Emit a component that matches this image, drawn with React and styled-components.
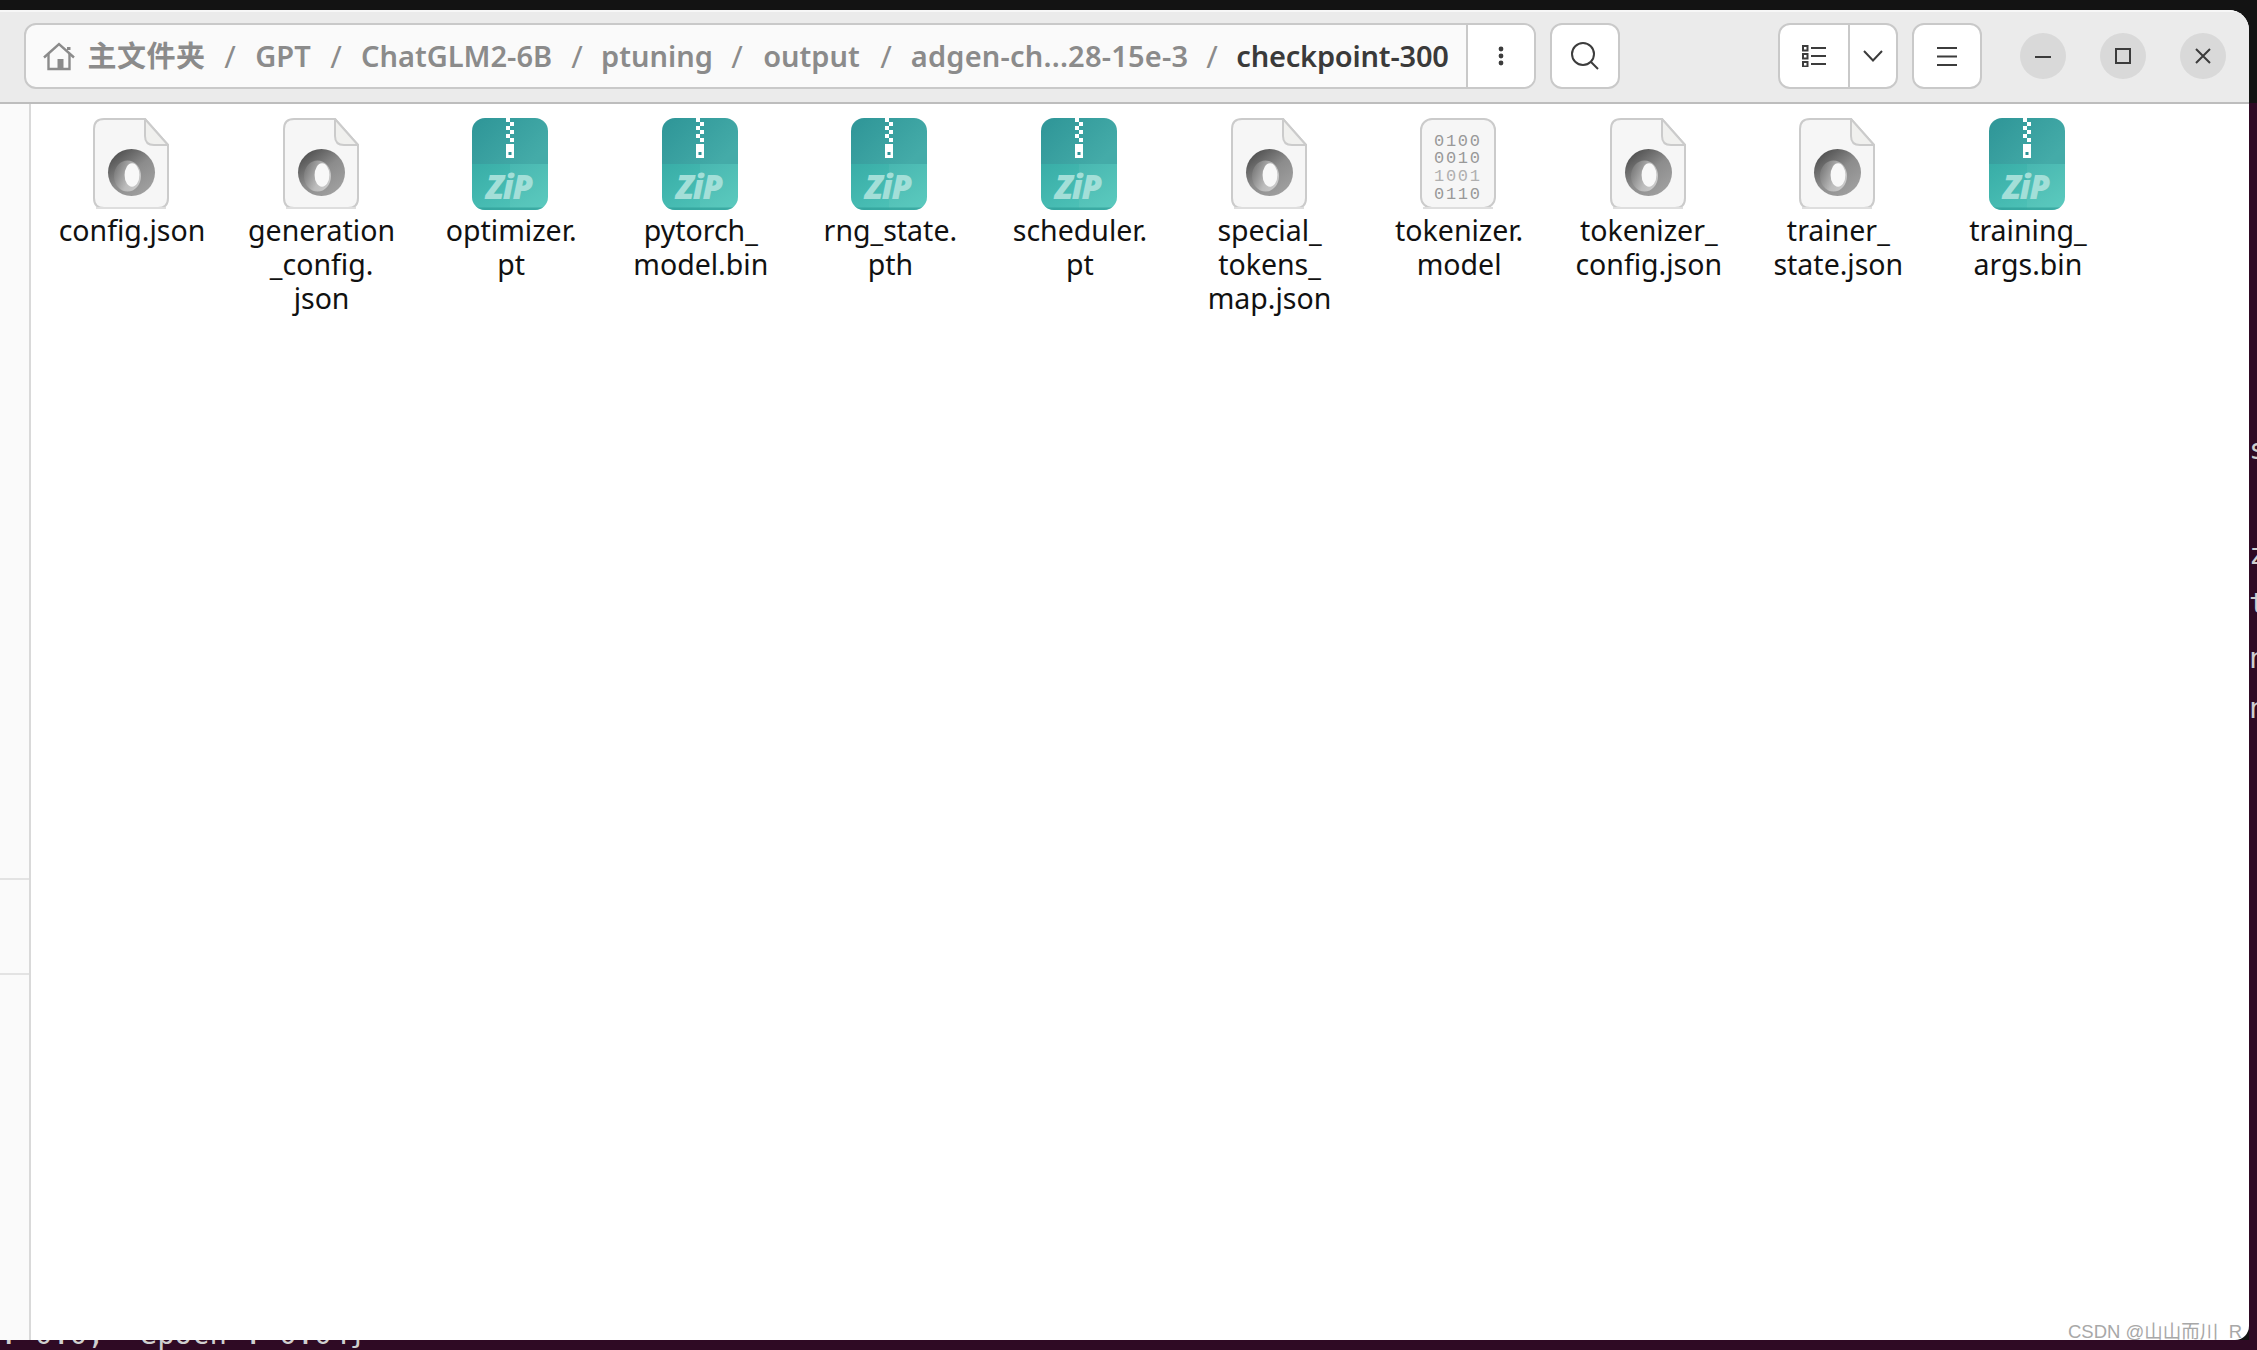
import React from 'react';
import styled, { createGlobalStyle } from 'styled-components';

const Global = createGlobalStyle`
  html, body { margin: 0; padding: 0; background: #131313; }
  body { width: 2257px; height: 1350px; overflow: hidden; font-family: "Noto Sans", "Noto Sans CJK SC", sans-serif; }
`;

const Screen = styled.div`
  display: grid;
  grid-template-columns: 2249px 8px;
  grid-template-rows: 1340px 10px;
  width: 2257px;
  height: 1350px;
  background: #131313;
`;

const Window = styled.div`
  position: relative;
  margin-top: 10px;
  display: flex;
  flex-direction: column;
  background: #fff;
  border-radius: 0 20px 14px 0;
  overflow: hidden;
  z-index: 1;
`;

const HeaderBar = styled.header`
  display: flex;
  align-items: flex-start;
  box-sizing: border-box;
  height: 94px;
  padding: 11px 23px 0 24px;
  background: #ebebeb;
  border-top: 2px solid #f7f7f7;
  border-bottom: 2px solid #bdbdbd;
`;

const PathBar = styled.div`
  display: flex;
  align-items: center;
  box-sizing: border-box;
  width: 1512px;
  height: 66px;
  background: #fafafa;
  border: 2px solid #c9c9c9;
  border-radius: 12px;
  overflow: hidden;
`;

const HomeWrap = styled.span`
  display: flex;
  margin-left: 17px;
  width: 45px;
  flex: none;
`;

const Crumb = styled.span`
  flex: none;
  display: flex;
  justify-content: center;
  width: ${p => p.$w}px;
  font-size: 29px;
  line-height: 36px;
  font-weight: 600;
  color: ${p => (p.$current ? '#3a3a3a' : '#8b8b8b')};
  white-space: nowrap;
  letter-spacing: ${p => p.$ls || 0}px;
`;

const Slash = styled.span`
  flex: none;
  width: ${p => p.$w || 50}px;
  text-align: center;
  font-size: 31px;
  line-height: 36px;
  color: #8b8b8b;
`;

const PathMenu = styled.button`
  flex: 1;
  margin-left: 17px;
  height: 100%;
  padding: 0;
  display: flex;
  align-items: center;
  justify-content: center;
  background: #fff;
  border: 0;
  border-left: 2px solid #c9c9c9;
`;

const ToolButton = styled.button`
  flex: none;
  box-sizing: border-box;
  width: ${p => p.$w || 70}px;
  height: 66px;
  margin-left: ${p => p.$ml || 0}px;
  padding: 0;
  display: flex;
  align-items: center;
  justify-content: center;
  background: #fff;
  border: 2px solid #c9c9c9;
  border-radius: 12px;
`;

const SplitButton = styled.div`
  flex: none;
  box-sizing: border-box;
  display: grid;
  grid-template-columns: 68px 1fr;
  width: 120px;
  height: 66px;
  margin-left: 158px;
  background: #fff;
  border: 2px solid #c9c9c9;
  border-radius: 12px;
  overflow: hidden;
`;

const SplitPart = styled.span`
  display: flex;
  align-items: center;
  justify-content: center;
  border-left: ${p => (p.$divided ? '2px solid #c9c9c9' : '0')};
`;

const WinButton = styled.button`
  flex: none;
  width: 46px;
  height: 46px;
  margin: 10px 0 0 ${p => p.$ml}px;
  padding: 0;
  display: flex;
  align-items: center;
  justify-content: center;
  border: 0;
  border-radius: 50%;
  background: #d9d9d9;
`;

const Body = styled.div`
  flex: 1;
  display: flex;
  min-height: 0;
`;

const Sidebar = styled.aside`
  flex: none;
  width: 29px;
  background: #fafafa;
  border-right: 2px solid #d9d9d9;
`;

const SidebarBlock = styled.div`
  height: 93px;
  margin-top: 774px;
  border-top: 2px solid #e3e3e3;
  border-bottom: 2px solid #e3e3e3;
`;

const FileGrid = styled.main`
  flex: 1;
  display: grid;
  grid-template-columns: repeat(11, 189.6px);
  align-content: start;
  padding: 14px 0 0 6.2px;
`;

const FileItem = styled.div`
  display: flex;
  flex-direction: column;
  align-items: center;
`;

const FileIconWrap = styled.div`
  display: flex;
  width: 76px;
  height: 92px;
  margin-right: 2px;
`;

const FileLabel = styled.div`
  margin-top: 3px;
  font-family: "Noto Sans", sans-serif;
  font-size: 28.5px;
  line-height: 34.2px;
  color: #111;
  text-align: center;
  white-space: pre-line;
`;

const Watermark = styled.div`
  position: absolute;
  right: 7px;
  bottom: -3px;
  font-family: "Liberation Sans", "Noto Sans CJK SC", sans-serif;
  font-size: 18.5px;
  line-height: 22px;
  color: #a8a8a8;
  white-space: nowrap;
`;

const TerminalEdge = styled.div`
  margin-top: 103px;
  background: #2f0a24;
  overflow: hidden;
  display: flex;
  flex-direction: column;
`;

const EdgeGlyph = styled.span`
  margin-top: ${p => p.$gap}px;
  font-family: "DejaVu Sans Mono", monospace;
  font-size: 29px;
  line-height: 34px;
  color: #cfcfcf;
`;

const TerminalStrip = styled.div`
  grid-column: 1 / 3;
  background: #2f0a24;
  overflow: hidden;
`;

const TerminalText = styled.pre`
  margin: -23px 0 0;
  font-family: "DejaVu Sans Mono", monospace;
  font-size: 29px;
  line-height: 34px;
  color: #cfcfcf;
`;

function HomeIcon() {
  return (
    <svg width="32" height="29" viewBox="0 0 32 29" fill="none" stroke="#8b8b8b" strokeWidth="2.4">
      <path d="M1 15.5 L16 2 L31 15.5" />
      <path d="M5.5 11 V27 H26.5 V11" />
      <rect x="14.5" y="17" width="6" height="11" fill="#8b8b8b" stroke="none" />
      <rect x="24" y="5" width="3.5" height="3" fill="#8b8b8b" stroke="none" />
    </svg>
  );
}

function JsonIcon({ id }) {
  return (
    <svg width="76" height="92" viewBox="0 0 76 92">
      <defs>
        <linearGradient id={`ring${id}`} x1="0.1" y1="0" x2="0.9" y2="1">
          <stop offset="0" stopColor="#454545" />
          <stop offset="0.5" stopColor="#8c8c8c" />
          <stop offset="1" stopColor="#a4a4a4" />
        </linearGradient>
        <linearGradient id={`band${id}`} x1="0" y1="0.2" x2="1" y2="0.7">
          <stop offset="0" stopColor="#747474" />
          <stop offset="0.6" stopColor="#bcbcbc" />
          <stop offset="1" stopColor="#cacaca" />
        </linearGradient>
      </defs>
      <path d="M11 1 H52 L75 27 V80 Q75 90 65 90 H11 Q1 90 1 80 V11 Q1 1 11 1 Z" fill="#f6f6f6" stroke="#cbcbcb" strokeWidth="2" />
      <path d="M52 1 V18 Q52 27 61 27 H75 Z" fill="#f0f0ee" stroke="#cbcbcb" strokeWidth="2" strokeLinejoin="round" />
      <path d="M3 90 H73" stroke="#dedede" strokeWidth="2" />
      <circle cx="38.5" cy="54.5" r="23.5" fill={`url(#ring${id})`} />
      <ellipse cx="34.5" cy="58" rx="13.5" ry="15.5" fill={`url(#band${id})`} />
      <ellipse cx="39" cy="57" rx="7.4" ry="11.8" fill="#f8f8f8" />
    </svg>
  );
}

function ZipIcon({ id }) {
  const checks = [0, 8, 16];
  return (
    <svg width="76" height="92" viewBox="0 0 76 92">
      <defs>
        <linearGradient id={`zt${id}`} x1="0" y1="0" x2="1" y2="0.6">
          <stop offset="0" stopColor="#2e9597" />
          <stop offset="1" stopColor="#44aba8" />
        </linearGradient>
        <linearGradient id={`zb${id}`} x1="0" y1="0" x2="1" y2="1">
          <stop offset="0" stopColor="#38ada7" />
          <stop offset="1" stopColor="#54c8bc" />
        </linearGradient>
        <clipPath id={`zc${id}`}>
          <rect x="0" y="0" width="76" height="92" rx="13" />
        </clipPath>
      </defs>
      <g clipPath={`url(#zc${id})`}>
        <rect width="76" height="46" fill={`url(#zt${id})`} />
        <rect y="46" width="76" height="46" fill={`url(#zb${id})`} />
        <rect x="38" y="46" width="38" height="46" fill="#fff" opacity="0.05" />
        <rect y="89.5" width="76" height="2.5" fill="#2f9e99" opacity="0.7" />
        {checks.map(y => (
          <g key={y} fill="#fff">
            <rect x="34" y={y} width="4" height="4" />
            <rect x="38" y={y + 4} width="4" height="4" />
          </g>
        ))}
        <rect x="34" y="26" width="8" height="14" fill="#fff" />
        <rect x="36.5" y="34" width="3" height="3" fill="#2b9295" />
      </g>
      <text x="37" y="81" textAnchor="middle" fontFamily="Open Sans, sans-serif" fontWeight="800" fontStyle="italic" fontSize="33" letterSpacing="-1" fill="#a3dfd8">ZiP</text>
    </svg>
  );
}

function BinIcon() {
  const rows = ['0100', '0010', '1001', '0110'];
  return (
    <svg width="76" height="92" viewBox="0 0 76 92">
      <rect x="1" y="1" width="74" height="89" rx="11" fill="#f6f6f6" stroke="#cbcbcb" strokeWidth="2" />
      <path d="M3 90 H73" stroke="#dedede" strokeWidth="2" />
      {rows.map((r, i) => (
        <text key={r} x="14" y={27.5 + i * 17.7} fontFamily="Liberation Mono, monospace" fontSize="17" letterSpacing="1.7" fill={i === 2 ? '#b0b0b0' : '#999'}>{r}</text>
      ))}
    </svg>
  );
}

const Stroke = ({ w, h, children, sw = 2, color = '#3c3c3c' }) => (
  <svg width={w} height={h} viewBox={`0 0 ${w} ${h}`} fill="none" stroke={color} strokeWidth={sw}>{children}</svg>
);

const crumbs = [
  { t: '主文件夹', w: 117, ls: 0.5 },
  { t: 'GPT', w: 56 },
  { t: 'ChatGLM2-6B', w: 191 },
  { t: 'ptuning', w: 110 },
  { t: 'output', w: 99 },
  { t: 'adgen-ch...28-15e-3', w: 277, ls: 0.2 },
  { t: 'checkpoint-300', w: 213, ls: -0.2, current: true },
];

const files = [
  { n: 'config.json', k: 'json' },
  { n: 'generation\n_config.\njson', k: 'json' },
  { n: 'optimizer.\npt', k: 'zip' },
  { n: 'pytorch_\nmodel.bin', k: 'zip' },
  { n: 'rng_state.\npth', k: 'zip' },
  { n: 'scheduler.\npt', k: 'zip' },
  { n: 'special_\ntokens_\nmap.json', k: 'json' },
  { n: 'tokenizer.\nmodel', k: 'bin' },
  { n: 'tokenizer_\nconfig.json', k: 'json' },
  { n: 'trainer_\nstate.json', k: 'json' },
  { n: 'training_\nargs.bin', k: 'zip' },
];

const edgeGlyphs = [
  { c: 's', gap: 329 },
  { c: 'z', gap: 71 },
  { c: 't', gap: 15 },
  { c: 'n', gap: 21 },
  { c: 'n', gap: 16 },
];

export default function App() {
  return (
    <Screen>
      <Global />
      <Window>
        <HeaderBar>
          <PathBar>
            <HomeWrap><HomeIcon /></HomeWrap>
            {crumbs.map((c, i) => (
              <React.Fragment key={c.t}>
                {i > 0 && <Slash $w={i === 6 ? 48 : 50}>/</Slash>}
                <Crumb $w={c.w} $ls={c.ls} $current={c.current}>{c.t}</Crumb>
              </React.Fragment>
            ))}
            <PathMenu aria-label="more">
              <Stroke w={6} h={20} sw={0}>
                <circle cx="3" cy="3" r="2.4" fill="#3c3c3c" />
                <circle cx="3" cy="10" r="2.4" fill="#3c3c3c" />
                <circle cx="3" cy="17" r="2.4" fill="#3c3c3c" />
              </Stroke>
            </PathMenu>
          </PathBar>
          <ToolButton $ml={14} aria-label="search">
            <Stroke w={30} h={30}>
              <circle cx="13" cy="13" r="11" />
              <path d="M21 21 L28 28" />
            </Stroke>
          </ToolButton>
          <SplitButton>
            <SplitPart>
              <Stroke w={24} h={22}>
                <rect x="1" y="1" width="4.5" height="4.5" />
                <rect x="1" y="9" width="4.5" height="4.5" />
                <rect x="1" y="17" width="4.5" height="4.5" />
                <path d="M9 3 H24 M9 11 H24 M9 19 H24" />
              </Stroke>
            </SplitPart>
            <SplitPart $divided>
              <Stroke w={20} h={12}>
                <path d="M1 1 L10 10.5 L19 1" />
              </Stroke>
            </SplitPart>
          </SplitButton>
          <ToolButton $ml={14} aria-label="menu">
            <Stroke w={20} h={20}>
              <path d="M0 2 H20 M0 10.5 H20 M0 19 H20" />
            </Stroke>
          </ToolButton>
          <WinButton $ml={38} aria-label="minimize">
            <Stroke w={16} h={6}><path d="M0 4 H16" /></Stroke>
          </WinButton>
          <WinButton $ml={34} aria-label="maximize">
            <Stroke w={16} h={16}><rect x="1" y="1" width="14" height="14" /></Stroke>
          </WinButton>
          <WinButton $ml={34} aria-label="close">
            <Stroke w={16} h={16}><path d="M1 1 L15 15 M15 1 L1 15" /></Stroke>
          </WinButton>
        </HeaderBar>
        <Body>
          <Sidebar><SidebarBlock /></Sidebar>
          <FileGrid>
            {files.map((f, i) => (
              <FileItem key={f.n}>
                <FileIconWrap>
                  {f.k === 'json' && <JsonIcon id={i} />}
                  {f.k === 'zip' && <ZipIcon id={i} />}
                  {f.k === 'bin' && <BinIcon />}
                </FileIconWrap>
                <FileLabel>{f.n}</FileLabel>
              </FileItem>
            ))}
          </FileGrid>
        </Body>
        <Watermark>CSDN @山山而川_R</Watermark>
      </Window>
      <TerminalEdge>
        {edgeGlyphs.map((g, i) => (
          <EdgeGlyph key={i} $gap={g.gap}>{g.c}</EdgeGlyph>
        ))}
      </TerminalEdge>
      <TerminalStrip>
        <TerminalText>{": 0.0, 'epoch': 0.04}"}</TerminalText>
      </TerminalStrip>
    </Screen>
  );
}
